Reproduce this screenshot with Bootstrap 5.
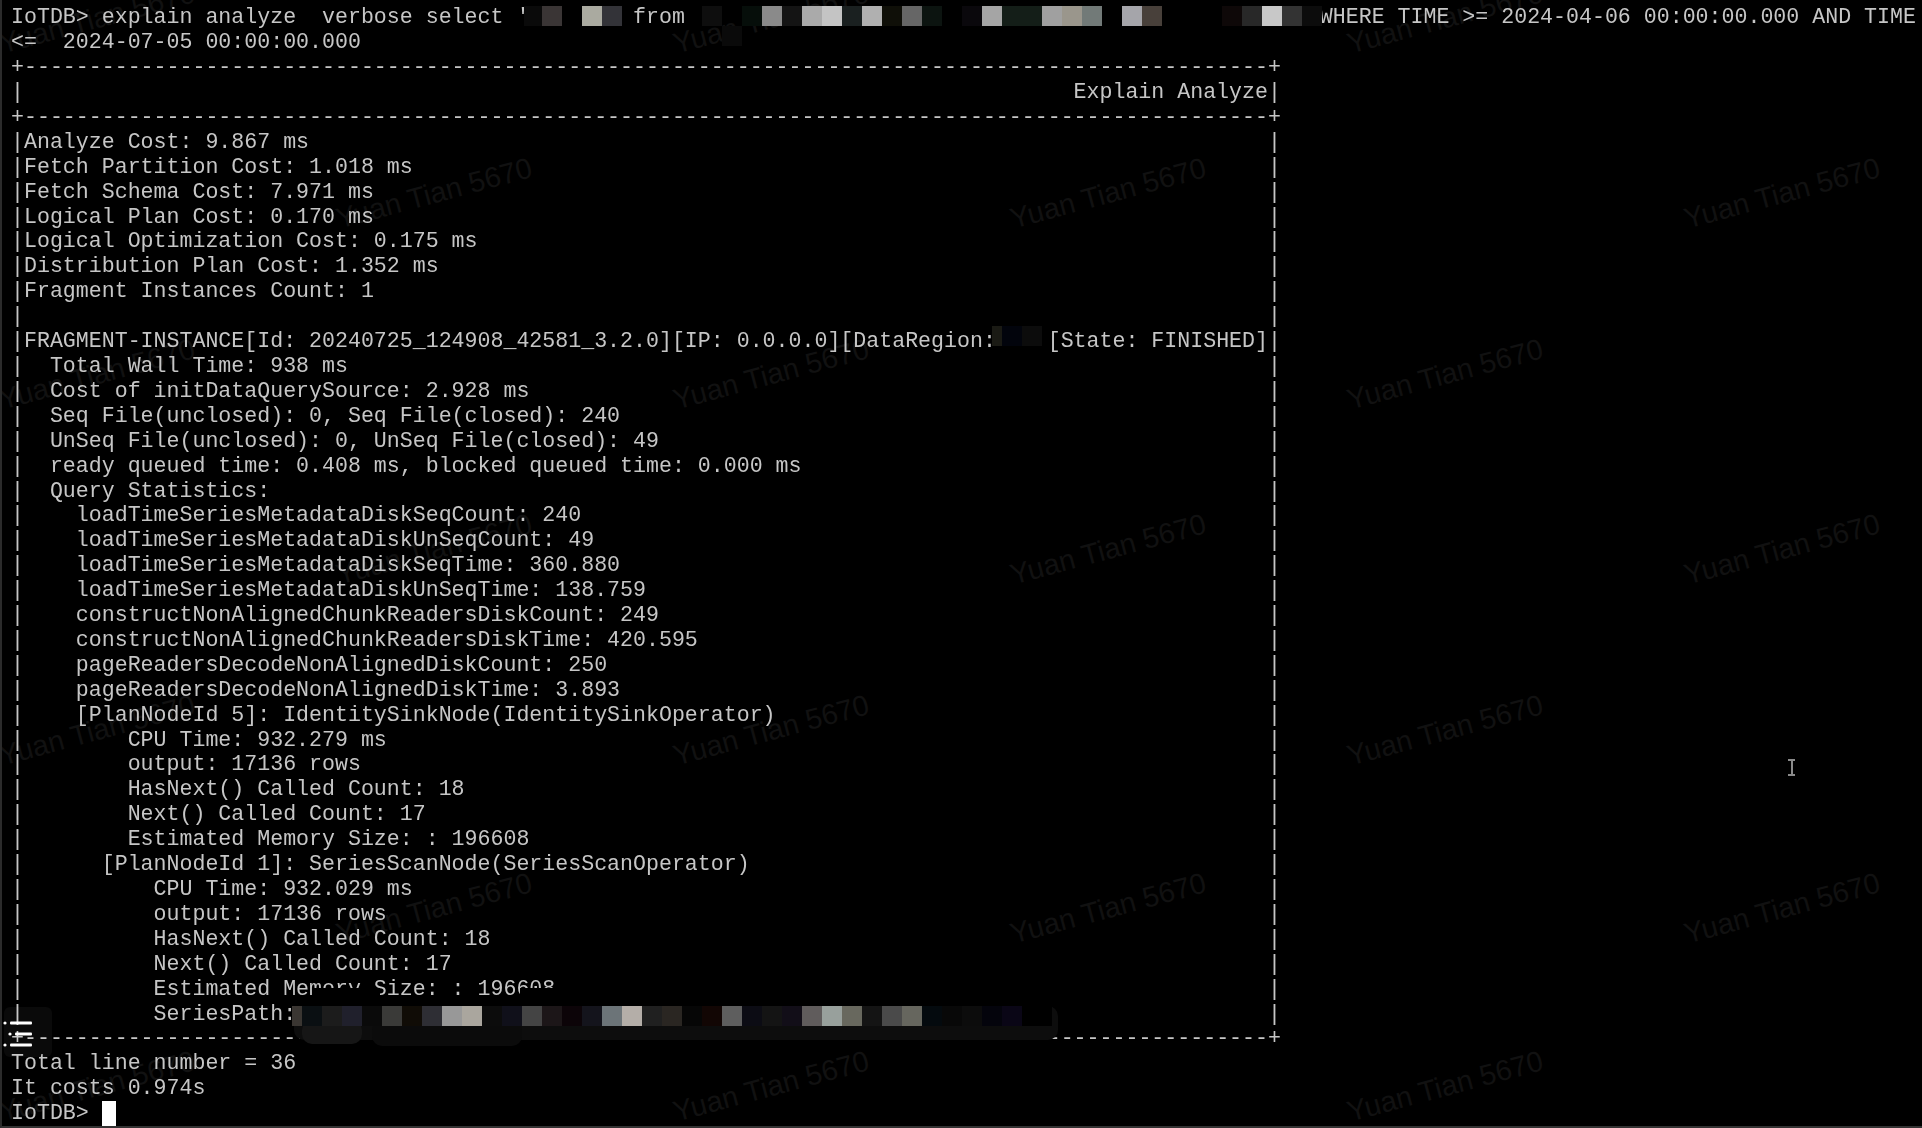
<!DOCTYPE html>
<html lang="en">
<head>
<meta charset="utf-8">
<title>IoTDB terminal</title>
<link href="https://cdn.jsdelivr.net/npm/bootstrap@5.3.0/dist/css/bootstrap.min.css" rel="stylesheet">
<style>
html,body{height:100%;background:#000;overflow:hidden}
.term-screen{height:1128px;width:1922px;background:#000;border-left:2px solid #2b2b2b;border-bottom:2px solid #333;overflow:hidden}
.term-text{padding:5.3px 0 0 9px;font-family:"Liberation Mono",monospace;font-size:21.6px;line-height:24.92px;color:#c6c6c6;z-index:1;filter:blur(.3px)}
.term-line{height:24.92px;white-space:pre}
.term-table{width:98ch}
.term-row{height:24.92px;white-space:pre}
.term-cursor{display:inline-block;width:14px;height:25px;background:#fff;vertical-align:top}
.layer-svg{top:0;left:0;width:1922px;height:1128px;pointer-events:none}
.layer-marks{z-index:0}
.layer-marks text{font-family:"Liberation Sans",sans-serif;font-size:29px;fill:#111;text-anchor:middle}
.layer-over{z-index:2}
</style>
</head>
<body>
<div class="term-screen position-relative">
<svg class="layer-svg layer-marks position-absolute" viewBox="0 0 1922 1128" aria-hidden="true">
<g transform="translate(-3 1)">
<text x="98" y="27" transform="rotate(-15 98 17)">Yuan Tian 5670</text>
<text x="772" y="27" transform="rotate(-15 772 17)">Yuan Tian 5670</text>
<text x="1446" y="27" transform="rotate(-15 1446 17)">Yuan Tian 5670</text>
<text x="435" y="202" transform="rotate(-15 435 192)">Yuan Tian 5670</text>
<text x="1109" y="202" transform="rotate(-15 1109 192)">Yuan Tian 5670</text>
<text x="1783" y="202" transform="rotate(-15 1783 192)">Yuan Tian 5670</text>
<text x="98" y="383" transform="rotate(-15 98 373)">Yuan Tian 5670</text>
<text x="772" y="383" transform="rotate(-15 772 373)">Yuan Tian 5670</text>
<text x="1446" y="383" transform="rotate(-15 1446 373)">Yuan Tian 5670</text>
<text x="435" y="558" transform="rotate(-15 435 548)">Yuan Tian 5670</text>
<text x="1109" y="558" transform="rotate(-15 1109 548)">Yuan Tian 5670</text>
<text x="1783" y="558" transform="rotate(-15 1783 548)">Yuan Tian 5670</text>
<text x="98" y="739" transform="rotate(-15 98 729)">Yuan Tian 5670</text>
<text x="772" y="739" transform="rotate(-15 772 729)">Yuan Tian 5670</text>
<text x="1446" y="739" transform="rotate(-15 1446 729)">Yuan Tian 5670</text>
<text x="435" y="917" transform="rotate(-15 435 907)">Yuan Tian 5670</text>
<text x="1109" y="917" transform="rotate(-15 1109 907)">Yuan Tian 5670</text>
<text x="1783" y="917" transform="rotate(-15 1783 907)">Yuan Tian 5670</text>
<text x="98" y="1095" transform="rotate(-15 98 1085)">Yuan Tian 5670</text>
<text x="772" y="1095" transform="rotate(-15 772 1085)">Yuan Tian 5670</text>
<text x="1446" y="1095" transform="rotate(-15 1446 1085)">Yuan Tian 5670</text>
</g>
</svg>
<div class="term-text position-relative">
<div class="term-line">IoTDB&gt; explain analyze  verbose select '        from                                                 WHERE TIME &gt;= 2024-04-06 00:00:00.000 AND TIME</div>
<div class="term-line">&lt;=  2024-07-05 00:00:00.000</div>
<div class="term-table">
<div class="term-row">+------------------------------------------------------------------------------------------------+</div>
<div class="term-row d-flex justify-content-between"><span>|</span><span>Explain Analyze|</span></div>
<div class="term-row">+------------------------------------------------------------------------------------------------+</div>
<div class="term-row d-flex justify-content-between"><span>|Analyze Cost: 9.867 ms</span><span>|</span></div>
<div class="term-row d-flex justify-content-between"><span>|Fetch Partition Cost: 1.018 ms</span><span>|</span></div>
<div class="term-row d-flex justify-content-between"><span>|Fetch Schema Cost: 7.971 ms</span><span>|</span></div>
<div class="term-row d-flex justify-content-between"><span>|Logical Plan Cost: 0.170 ms</span><span>|</span></div>
<div class="term-row d-flex justify-content-between"><span>|Logical Optimization Cost: 0.175 ms</span><span>|</span></div>
<div class="term-row d-flex justify-content-between"><span>|Distribution Plan Cost: 1.352 ms</span><span>|</span></div>
<div class="term-row d-flex justify-content-between"><span>|Fragment Instances Count: 1</span><span>|</span></div>
<div class="term-row d-flex justify-content-between"><span>|</span><span>|</span></div>
<div class="term-row d-flex justify-content-between"><span>|FRAGMENT-INSTANCE[Id: 20240725_124908_42581_3.2.0][IP: 0.0.0.0][DataRegion:    [State: FINISHED]</span><span>|</span></div>
<div class="term-row d-flex justify-content-between"><span>|  Total Wall Time: 938 ms</span><span>|</span></div>
<div class="term-row d-flex justify-content-between"><span>|  Cost of initDataQuerySource: 2.928 ms</span><span>|</span></div>
<div class="term-row d-flex justify-content-between"><span>|  Seq File(unclosed): 0, Seq File(closed): 240</span><span>|</span></div>
<div class="term-row d-flex justify-content-between"><span>|  UnSeq File(unclosed): 0, UnSeq File(closed): 49</span><span>|</span></div>
<div class="term-row d-flex justify-content-between"><span>|  ready queued time: 0.408 ms, blocked queued time: 0.000 ms</span><span>|</span></div>
<div class="term-row d-flex justify-content-between"><span>|  Query Statistics:</span><span>|</span></div>
<div class="term-row d-flex justify-content-between"><span>|    loadTimeSeriesMetadataDiskSeqCount: 240</span><span>|</span></div>
<div class="term-row d-flex justify-content-between"><span>|    loadTimeSeriesMetadataDiskUnSeqCount: 49</span><span>|</span></div>
<div class="term-row d-flex justify-content-between"><span>|    loadTimeSeriesMetadataDiskSeqTime: 360.880</span><span>|</span></div>
<div class="term-row d-flex justify-content-between"><span>|    loadTimeSeriesMetadataDiskUnSeqTime: 138.759</span><span>|</span></div>
<div class="term-row d-flex justify-content-between"><span>|    constructNonAlignedChunkReadersDiskCount: 249</span><span>|</span></div>
<div class="term-row d-flex justify-content-between"><span>|    constructNonAlignedChunkReadersDiskTime: 420.595</span><span>|</span></div>
<div class="term-row d-flex justify-content-between"><span>|    pageReadersDecodeNonAlignedDiskCount: 250</span><span>|</span></div>
<div class="term-row d-flex justify-content-between"><span>|    pageReadersDecodeNonAlignedDiskTime: 3.893</span><span>|</span></div>
<div class="term-row d-flex justify-content-between"><span>|    [PlanNodeId 5]: IdentitySinkNode(IdentitySinkOperator)</span><span>|</span></div>
<div class="term-row d-flex justify-content-between"><span>|        CPU Time: 932.279 ms</span><span>|</span></div>
<div class="term-row d-flex justify-content-between"><span>|        output: 17136 rows</span><span>|</span></div>
<div class="term-row d-flex justify-content-between"><span>|        HasNext() Called Count: 18</span><span>|</span></div>
<div class="term-row d-flex justify-content-between"><span>|        Next() Called Count: 17</span><span>|</span></div>
<div class="term-row d-flex justify-content-between"><span>|        Estimated Memory Size: : 196608</span><span>|</span></div>
<div class="term-row d-flex justify-content-between"><span>|      [PlanNodeId 1]: SeriesScanNode(SeriesScanOperator)</span><span>|</span></div>
<div class="term-row d-flex justify-content-between"><span>|          CPU Time: 932.029 ms</span><span>|</span></div>
<div class="term-row d-flex justify-content-between"><span>|          output: 17136 rows</span><span>|</span></div>
<div class="term-row d-flex justify-content-between"><span>|          HasNext() Called Count: 18</span><span>|</span></div>
<div class="term-row d-flex justify-content-between"><span>|          Next() Called Count: 17</span><span>|</span></div>
<div class="term-row d-flex justify-content-between"><span>|          Estimated Memory Size: : 196608</span><span>|</span></div>
<div class="term-row d-flex justify-content-between"><span>|          SeriesPath:</span><span>|</span></div>
<div class="term-row">+------------------------------------------------------------------------------------------------+</div>
</div>
<div class="term-line">Total line number = 36</div>
<div class="term-line">It costs 0.974s</div>
<div class="term-line">IoTDB&gt; <span class="term-cursor"></span></div>
</div>
<svg class="layer-svg layer-over position-absolute" viewBox="0 0 1922 1128" aria-hidden="true">
<g shape-rendering="crispEdges">
<rect x="522" y="6" width="18" height="20" fill="#0a0a0a"/><rect x="540" y="6" width="20" height="20" fill="#3a3535"/><rect x="580" y="6" width="20" height="20" fill="#aaaaa0"/><rect x="600" y="6" width="20" height="20" fill="#333338"/>
<rect x="700" y="6" width="20" height="20" fill="#0e0e0e"/><rect x="740" y="6" width="20" height="20" fill="#060e0a"/><rect x="760" y="6" width="20" height="20" fill="#8a8a8a"/><rect x="780" y="6" width="20" height="20" fill="#141414"/><rect x="800" y="6" width="20" height="20" fill="#aaaaaa"/><rect x="820" y="6" width="20" height="20" fill="#c4c4c4"/><rect x="840" y="6" width="20" height="20" fill="#1a2020"/><rect x="860" y="6" width="20" height="20" fill="#b0b0b0"/><rect x="880" y="6" width="20" height="20" fill="#0f0f08"/><rect x="900" y="6" width="20" height="20" fill="#666666"/><rect x="920" y="6" width="20" height="20" fill="#0c1410"/><rect x="960" y="6" width="20" height="20" fill="#0a080c"/><rect x="980" y="6" width="20" height="20" fill="#a5a5a5"/><rect x="1000" y="6" width="40" height="20" fill="#141e18"/><rect x="1040" y="6" width="20" height="20" fill="#a0a0a0"/><rect x="1060" y="6" width="20" height="20" fill="#9a968c"/><rect x="1080" y="6" width="20" height="20" fill="#727a78"/><rect x="1120" y="6" width="20" height="20" fill="#a5a5aa"/><rect x="1140" y="6" width="20" height="20" fill="#48403a"/><rect x="1220" y="6" width="20" height="20" fill="#0e0808"/><rect x="1240" y="6" width="20" height="20" fill="#282828"/><rect x="1260" y="6" width="20" height="20" fill="#c8c8c8"/><rect x="1280" y="6" width="20" height="20" fill="#333333"/><rect x="1300" y="6" width="20" height="20" fill="#0c0c0c"/>
<rect x="720" y="26" width="20" height="20" fill="#0a0a0a"/>
<rect x="990" y="326" width="10" height="20" fill="#1a1a14"/><rect x="1000" y="326" width="20" height="20" fill="#02040c"/><rect x="1020" y="326" width="20" height="20" fill="#0c0c0c"/>
</g>
<rect x="312" y="988" width="66" height="30" fill="#000"/>
<rect x="518" y="988" width="46" height="30" fill="#000"/>
<rect x="292" y="1006" width="764" height="34" rx="10" fill="#0d0d0d"/>
<rect x="300" y="1020" width="60" height="24" rx="10" fill="#161616"/>
<rect x="370" y="1020" width="150" height="26" rx="10" fill="#0b0b0b"/>
<g shape-rendering="crispEdges">
<rect x="290" y="1006" width="10" height="20" fill="#3a3632"/><rect x="300" y="1006" width="20" height="20" fill="#0a0f12"/><rect x="320" y="1006" width="20" height="20" fill="#1c1c1c"/><rect x="340" y="1006" width="20" height="20" fill="#20202c"/><rect x="360" y="1006" width="20" height="20" fill="#0a0a0a"/><rect x="380" y="1006" width="20" height="20" fill="#3a3a38"/><rect x="400" y="1006" width="20" height="20" fill="#100c06"/><rect x="420" y="1006" width="20" height="20" fill="#2e2e34"/><rect x="440" y="1006" width="20" height="20" fill="#989898"/><rect x="460" y="1006" width="20" height="20" fill="#aaa69e"/><rect x="480" y="1006" width="20" height="20" fill="#0c0c0c"/><rect x="500" y="1006" width="20" height="20" fill="#10101a"/><rect x="520" y="1006" width="20" height="20" fill="#444444"/><rect x="540" y="1006" width="20" height="20" fill="#1c1618"/><rect x="560" y="1006" width="20" height="20" fill="#0c0408"/><rect x="580" y="1006" width="20" height="20" fill="#14141c"/><rect x="600" y="1006" width="20" height="20" fill="#6c7478"/><rect x="620" y="1006" width="20" height="20" fill="#b4aea8"/><rect x="640" y="1006" width="20" height="20" fill="#202020"/><rect x="660" y="1006" width="20" height="20" fill="#2a2622"/><rect x="680" y="1006" width="20" height="20" fill="#060606"/><rect x="700" y="1006" width="20" height="20" fill="#120604"/><rect x="720" y="1006" width="20" height="20" fill="#5e5e5e"/><rect x="740" y="1006" width="20" height="20" fill="#0c0c14"/><rect x="760" y="1006" width="20" height="20" fill="#141414"/><rect x="780" y="1006" width="20" height="20" fill="#120e18"/><rect x="800" y="1006" width="20" height="20" fill="#605c5c"/><rect x="820" y="1006" width="20" height="20" fill="#98a09c"/><rect x="840" y="1006" width="20" height="20" fill="#68685e"/><rect x="860" y="1006" width="20" height="20" fill="#141414"/><rect x="880" y="1006" width="20" height="20" fill="#4a4a4a"/><rect x="900" y="1006" width="20" height="20" fill="#66665e"/><rect x="920" y="1006" width="20" height="20" fill="#040a0e"/><rect x="940" y="1006" width="20" height="20" fill="#080808"/><rect x="960" y="1006" width="20" height="20" fill="#0c0c0c"/><rect x="980" y="1006" width="20" height="20" fill="#04040c"/><rect x="1000" y="1006" width="20" height="20" fill="#0a0616"/><rect x="1020" y="1006" width="30" height="20" fill="#000"/>
</g>
<rect x="2" y="1007" width="48" height="50" rx="6" fill="#fff" fill-opacity=".04"/>
<g fill="#fff">
<rect x="8" y="1021.5" width="22" height="3" rx="1"/><rect x="13" y="1032.5" width="17" height="3" rx="1"/><rect x="8" y="1043.5" width="22" height="3" rx="1"/>
<circle cx="3" cy="1023" r="1.6"/><circle cx="8" cy="1034" r="1.6"/><circle cx="3" cy="1045" r="1.6"/>
</g>
<g fill="#8a8a8a" shape-rendering="crispEdges">
<rect x="1786" y="759" width="7" height="1.5"/><rect x="1786" y="774" width="7" height="1.5"/><rect x="1789" y="760" width="1.5" height="15"/>
</g>
</svg>
</div>
<script src="https://cdn.jsdelivr.net/npm/bootstrap@5.3.0/dist/js/bootstrap.bundle.min.js"></script>
</body>
</html>
